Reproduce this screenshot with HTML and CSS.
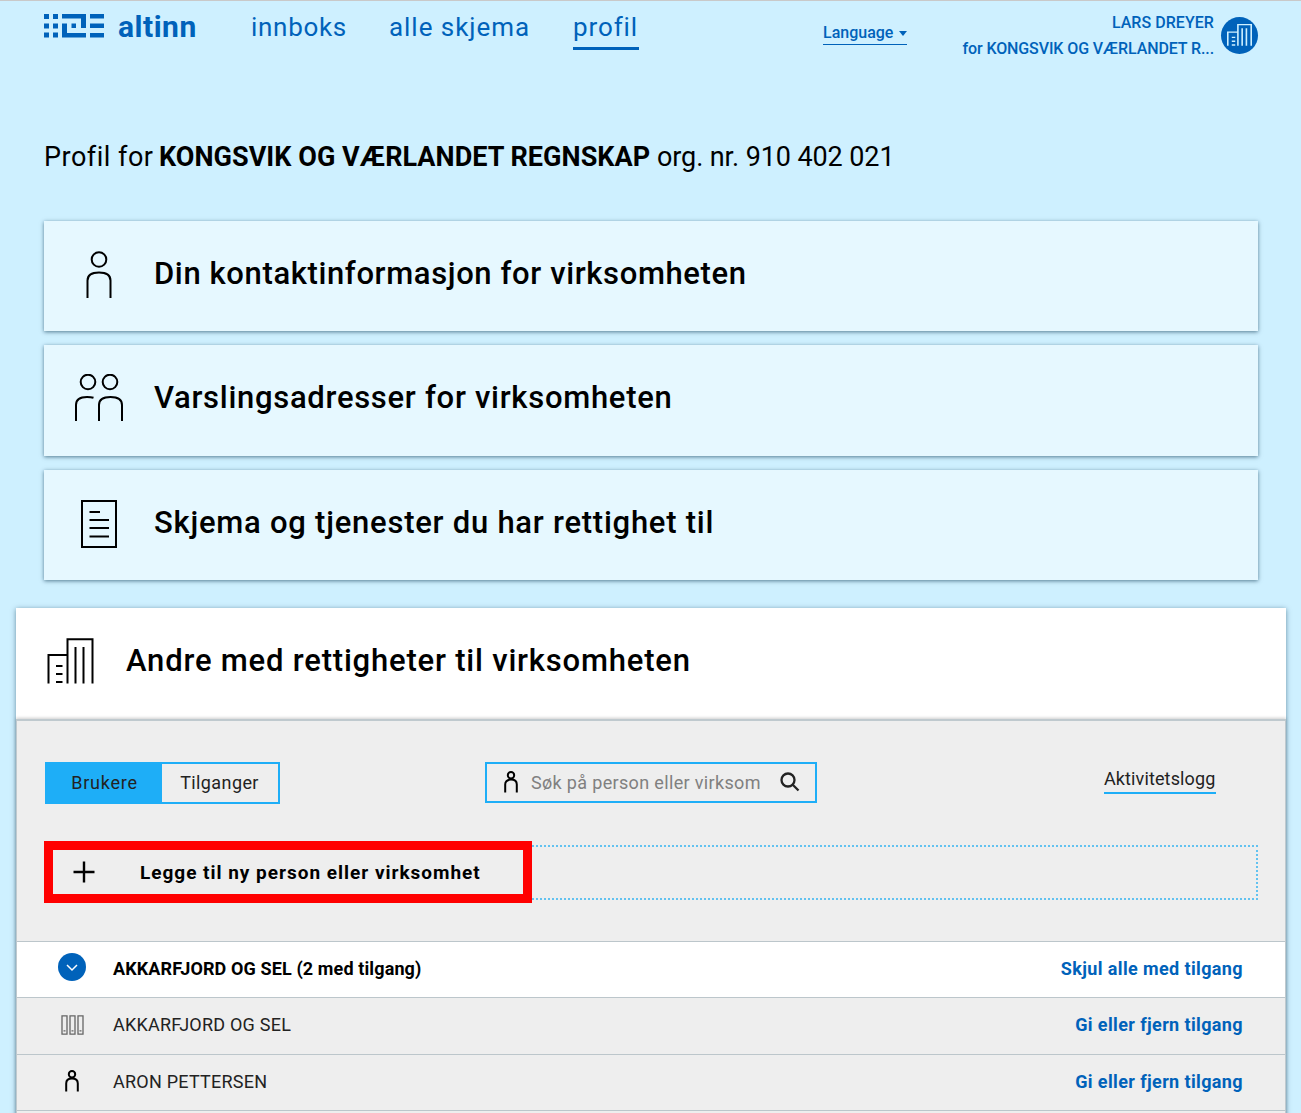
FILE: index.html
```html
<!DOCTYPE html>
<html lang="no">
<head>
<meta charset="utf-8">
<title>Altinn – profil</title>
<link rel="stylesheet" href="styles.css">
</head>
<body>
<svg class="defs" width="0" height="0">
  <symbol id="person" viewBox="0 0 14 22"><circle cx="7" cy="4.2" r="3.2"/><path d="M1.2 21.5V13.5Q1.2 8.6 7 8.6T12.8 13.5V21.5"/></symbol>
  <symbol id="building" viewBox="0 0 47 46"><path d="M1.5 45.5V17H20.500M20.500 45.500V1.300H45.500V45.500M28.500 9V45.500M36.500 9V45.500M9 28H15.500M9 36H15.500M9 44H15.500"/></symbol>
</svg>
<header class="header">
  <a class="logo">
    <svg width="62" height="24" viewBox="0 0 62 24"><path d="M1 0h5v5H1zM10 0h5v5h-5zM1 9.500h5v5H1zM10 9.500h5v5h-5zM1 18.500h5v5H1zM10 18.500h5v5h-5zM19 0h24v14h-5V4.500H19zM19 9.500h5v9.500h19v4.500H19zM28.500 9.500h4.500v4.500h-4.500zM47 0h14v4.500H47zM47 9.500h14V14H47zM47 19h14v4.500H47z"/></svg>
    <span class="wordmark">altinn</span>
  </a>
  <nav class="nav">
    <a class="nav-inbox">innboks</a>
    <a class="nav-forms">alle skjema</a>
    <a class="nav-profile">profil</a>
  </nav>
  <a class="language">Language <i class="caret"></i></a>
  <div class="account">
    <div class="account-text"><div class="account-name">LARS DREYER</div><div class="account-org">for KONGSVIK OG VÆRLANDET R...</div></div>
    <span class="avatar"><svg width="25" height="22" viewBox="0 0 47 46" preserveAspectRatio="none"><use href="#building" width="47" height="46"/></svg></span>
  </div>
</header>
<main>
  <h1 class="title"><span class="title-lead">Profil for</span> <strong>KONGSVIK OG VÆRLANDET REGNSKAP</strong> <span class="title-org">org. nr. 910 402 021</span></h1>
  <section class="cards">
    <div class="card"><span class="card-icon"><svg width="28" height="48" viewBox="0 0 28 48"><circle cx="14" cy="8.500" r="7.300"/><path d="M2.500 47V29.500Q2.500 21.500 14 21.500T25.500 29.500V47"/></svg></span><h2 class="h-contact">Din kontaktinformasjon for virksomheten</h2></div>
    <div class="card"><span class="card-icon pair"><svg width="50" height="48" viewBox="0 0 50 48"><circle cx="14" cy="8" r="7.300"/><circle cx="36" cy="8" r="7.300"/><path d="M2 47V31Q2 23 13 23Q17 23 19.500 23.800M25 47V31Q25 23 36.500 23T48 31V47"/></svg></span><h2 class="h-notify">Varslingsadresser for virksomheten</h2></div>
    <div class="card"><span class="card-icon"><svg width="36" height="48" viewBox="0 0 36 48"><path d="M1 1H35V47H1zM8.500 12H19M8.500 20H28M8.500 28H28M8.500 36.500H28"/></svg></span><h2 class="h-forms">Skjema og tjenester du har rettighet til</h2></div>
  </section>
  <section class="panel">
    <div class="panel-head"><svg width="47" height="46"><use href="#building"/></svg><h2 class="h-others">Andre med rettigheter til virksomheten</h2></div>
    <div class="panel-body">
      <div class="tools">
        <div class="tabs"><a class="tab active">Brukere</a><a class="tab"><span class="tab-label">Tilganger</span></a></div>
        <div class="search"><svg class="person" width="14" height="22"><use href="#person"/></svg><span class="placeholder">Søk på person eller virksom</span><svg class="glass" width="20" height="20" viewBox="0 0 20 20"><circle cx="8" cy="8" r="6.500"/><path d="M12.500 12.500L18.500 18.500"/></svg></div>
        <a class="log">Aktivitetslogg</a>
      </div>
      <div class="add">
        <div class="highlight"></div>
        <svg width="22" height="22" viewBox="0 0 22 22"><path d="M11 0.500V21.500M0.500 11H21.500"/></svg>
        <span class="add-label">Legge til ny person eller virksomhet</span>
      </div>
      <ul class="rows">
        <li class="row open"><span class="row-icon"><span class="toggle"><svg width="12" height="8" viewBox="0 0 12 8"><path d="M1 1L6 6L11 1"/></svg></span></span><span class="row-name n-open">AKKARFJORD OG SEL (2 med tilgang)</span><a class="hide-link">Skjul alle med tilgang</a></li>
        <li class="row"><span class="row-icon"><svg class="binders" width="23" height="20" viewBox="0 0 23 20"><path d="M1 .8H6V19.200H1zM9 .8H14V19.200H9zM17 .8H22V19.200H17zM2.500 15.800H4.500M10.500 15.800H12.500M18.500 15.800H20.500"/></svg></span><span class="row-name">AKKARFJORD OG SEL</span><a class="edit-link">Gi eller fjern tilgang</a></li>
        <li class="row"><span class="row-icon"><svg class="person" width="14" height="22"><use href="#person"/></svg></span><span class="row-name">ARON PETTERSEN</span><a class="edit-link">Gi eller fjern tilgang</a></li>
        <li class="row"></li>
      </ul>
    </div>
  </section>
</main>
</body>
</html>
```
FILE: styles.css
```css
* { box-sizing: border-box; }
html, body { height: 1113px; overflow: hidden; }
body {
  margin: 0;
  background: #cef0ff;
  border-top: 1px solid #c9c9c9;
  color: #000;
  font-family: Roboto, "Liberation Sans", sans-serif;
  white-space: nowrap;
}
h1, h2, ul { margin: 0; padding: 0; list-style: none; }
svg { display: block; flex: none; fill: none; stroke: #000; stroke-width: 2; }
.defs { position: absolute; }

.header { display: flex; height: 130px; padding-left: 43px; color: #0062ba; align-items: flex-start; }
.logo { display: flex; width: 208px; padding-top: 13px; }
.logo svg { fill: #0062ba; stroke: none; }
.wordmark { margin: -5px 0 0 13px; font-size: 30px; line-height: 36px; font-weight: 700; letter-spacing: .5px; }
.nav { display: flex; padding-top: 8px; font-size: 26px; line-height: 36px; font-weight: 450; }
.nav a { height: 41px; }
.nav-inbox { width: 138px; letter-spacing: .7px; }
.nav-forms { width: 184px; letter-spacing: .95px; }
.nav-profile { width: 66px; letter-spacing: .9px; border-bottom: 3px solid #0062ba; }
.language { display: flex; align-items: center; justify-content: space-between; width: 84px; height: 23px; margin: 21px 0 0 184px; border-bottom: 1px solid #0062ba; font-size: 16px; line-height: 20px; font-weight: 500; }
.caret { border: 4px solid transparent; border-top: 5px solid #0062ba; border-bottom: 0; }
.account { display: flex; margin: 8px 0 0 47px; font-size: 16px; line-height: 26px; font-weight: 500; }
.account-text { width: 260px; padding-top: 1px; text-align: right; }
.account-name { letter-spacing: .05px; }
.account-org { letter-spacing: -.1px; }
.avatar { display: flex; align-items: flex-start; justify-content: center; width: 37px; height: 37px; margin: 8px 0 0 7px; padding-top: 7px; border-radius: 50%; background: #0062ba; }
.avatar svg { stroke: #cef0ff; stroke-width: 3; }

.title { display: flex; height: 90px; padding: 6px 0 0 44px; font-size: 27px; line-height: 40px; font-weight: 400; }
.title strong { width: 506px; padding-left: 8px; letter-spacing: .04px; }
.title-lead { width: 107px; letter-spacing: .5px; }
.title-org { letter-spacing: -.1px; }
.cards { display: grid; gap: 14px; padding: 0 43px 0 44px; }
.card { display: flex; height: 110.300px; background: #e6f8ff; box-shadow: 0 1px 4px rgba(0, 45, 70, .6); align-items: center; }
.card-icon { display: flex; width: 109px; padding-bottom: 2px; justify-content: center; }
.card-icon.pair { padding-bottom: 5px; }
h2 { font-size: 31px; line-height: 40px; font-weight: 500; }
.card h2 { margin: -4px 0 0 1px; }
.h-contact { letter-spacing: .62px; }
.h-notify { letter-spacing: .71px; }
.h-forms { letter-spacing: .75px; }
.h-others { letter-spacing: .8px; }
.panel { margin: 28px 15px 0 16px; box-shadow: 0 1px 5px rgba(0, 45, 70, .5); }
.panel-head { display: flex; height: 111px; padding: 30px 0 0 31px; background: #fff; }
.panel-head h2 { margin: 3px 0 0 32px; }
.panel-body { height: 420px; border: solid #bfc9ce; border-width: 2px 1px 0; background: #eee; box-shadow: 0 -1px 3px rgba(0, 0, 0, .2); }
.tools { display: flex; align-items: flex-start; padding: 41px 69px 0 28px; height: 124px; color: #222; font-size: 18px; }
.tabs { display: flex; width: 235px; height: 42px; border: 2px solid #1eaef7; }
.tab { display: flex; align-items: center; justify-content: center; width: 115px; padding-bottom: 1px; letter-spacing: .4px; }
.tab.active { background: #1eaef7; letter-spacing: .75px; }
.search { display: flex; align-items: center; width: 332px; height: 41px; margin-left: 205px; padding: 0 15px 0 17px; border: 2px solid #1eaef7; color: #808080; }
.placeholder { padding-left: 13px; letter-spacing: .34px; }
.glass { margin-left: auto; stroke: #222; stroke-width: 2.300; }
.log { height: 32px; margin-left: auto; border-bottom: 2px solid #1eaef7; line-height: 34px; width: 112px; letter-spacing: .12px; }
.add { position: relative; display: flex; align-items: center; width: 1213px; height: 55px; margin-left: 28px; padding-left: 26px; border: 2px dotted #62c2f0; }
.add svg { stroke-width: 2.400; }
.add-label { margin-left: 45px; font-size: 19px; font-weight: 700; letter-spacing: .98px; }
.highlight { position: absolute; left: -3px; top: -6px; width: 488px; height: 62px; border: 9px solid #f00; }
.rows { margin-top: 41px; }
.row { display: flex; align-items: center; height: 56.500px; padding: 0 42px 3px 0; border-top: 1px solid #bcc6cb; font-size: 18px; color: #222; }
.row.open { background: #fff; color: #000; font-weight: 700; }
.row-icon { display: flex; justify-content: center; width: 96px; padding-left: 14px; }
.row-name { letter-spacing: .23px; }
.row-name.n-open { letter-spacing: .12px; }
.row a { margin-left: auto; color: #0062ba; font-weight: 700; letter-spacing: .38px; }
.toggle { display: flex; align-items: center; justify-content: center; width: 28px; height: 28px; margin-top: -3px; border-radius: 50%; background: #0062ba; }
.toggle svg { stroke: #fff; stroke-width: 1.500; margin-top: 3px; }
.binders { stroke: #666; stroke-width: 1.300; }
```
